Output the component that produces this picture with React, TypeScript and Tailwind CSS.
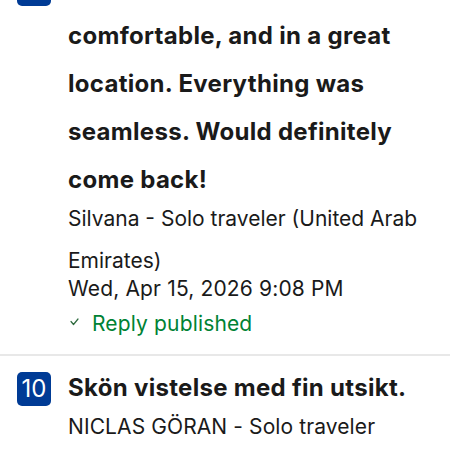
export default function App() {
  return (
    <div
      className="h-[450px] w-[450px] overflow-hidden bg-white text-[#1a1a1a]"
      style={{ fontFamily: "Inter, 'Noto Sans', sans-serif" }}
    >
      {/* Previous review, scrolled partly off screen */}
      <div className="-mt-[36px] flex gap-[17px] pl-[17px] pr-2">
        <div className="mt-2 h-[34px] w-[34px] shrink-0 rounded-[5px] bg-[#003b95]" />
        <div className="min-w-0 flex-1">
          {/* first title line sits above the viewport */}
          <div className="h-[48px]" />
          <p className="text-[24px] font-bold leading-[48px] tracking-[0.3px]">
            comfortable, and in a great
            <br />
            location. Everything was
            <br />
            seamless. Would definitely
            <br />
            come back!
          </p>
          <p className="-mt-[6px] text-[21px] leading-[42px]">
            Silvana - Solo traveler (United Arab
            <br />
            Emirates)
          </p>
          <p className="-mt-[7px] text-[21px] leading-[28px] tracking-[0.15px]">
            Wed, Apr 15, 2026 9:08 PM
          </p>
          <div className="flex items-start gap-[13px] pb-[9px] text-[#008234]">
            <svg
              width="9"
              height="8"
              viewBox="0 0 9 8"
              className="mt-[15px] ml-[2px]"
              fill="none"
              stroke="#2f6b3f"
              strokeWidth="1.2"
              strokeLinecap="round"
              strokeLinejoin="round"
            >
              <path d="M1 3.5 L3.5 6.5 L8 1" />
            </svg>
            <span className="text-[21px] leading-[42px] tracking-[0.15px]">
              Reply published
            </span>
          </div>
        </div>
      </div>

      <div className="h-[2px] bg-[#e8e8e8]" />

      {/* Next review */}
      <div className="flex gap-[17px] pt-2 pl-[17px] pr-2">
        <div className="mt-2 flex h-[34px] w-[34px] shrink-0 items-center justify-center rounded-[5px] bg-[#003b95] text-[24px] text-white">
          10
        </div>
        <div className="min-w-0 flex-1">
          <p className="text-[24px] font-bold leading-[48px] tracking-[0.3px]">
            Skön vistelse med fin utsikt.
          </p>
          <p className="-mt-[6px] text-[21px] leading-[42px] tracking-[0.1px]">
            NICLAS GÖRAN - Solo traveler
          </p>
        </div>
      </div>
    </div>
  );
}
